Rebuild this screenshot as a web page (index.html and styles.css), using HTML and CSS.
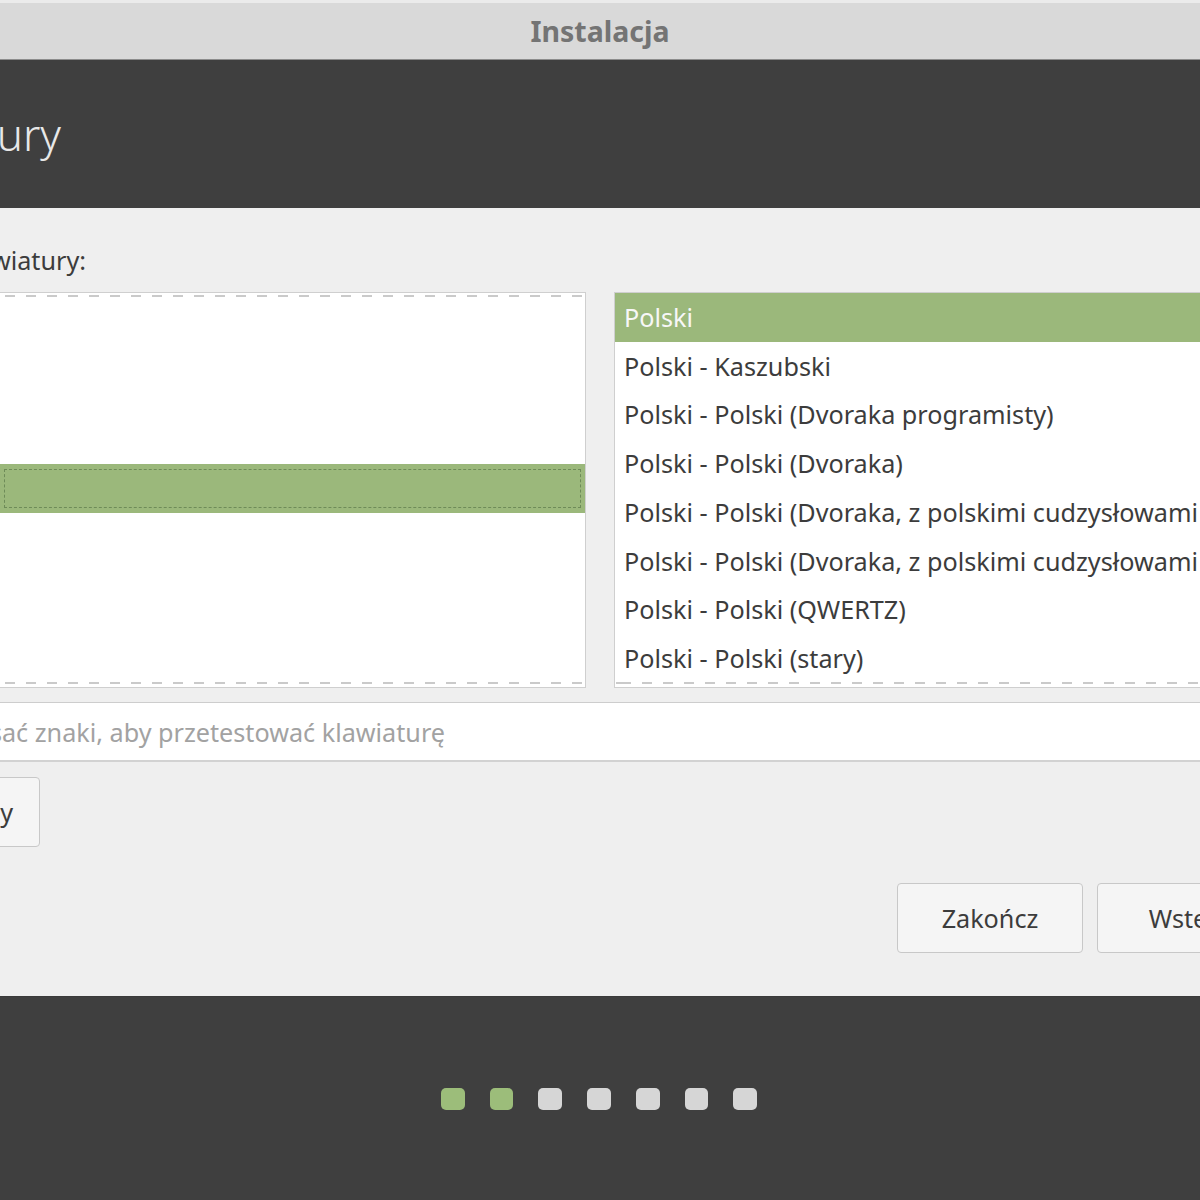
FILE: index.html
```html
<!DOCTYPE html>
<html lang="pl">
<head>
<meta charset="utf-8">
<title>Instalacja</title>
<link rel="stylesheet" href="styles.css">
</head>
<body>
<div class="window">
  <div class="titlebar"><span class="title">Instalacja</span></div>
  <div class="header">
    <div class="clip heading-clip"><span class="heading">Układ klawiatury</span></div>
  </div>
  <div class="content">
    <div class="clip label-clip"><span class="label">Wybierz układ klawiatury:</span></div>
    <div class="lists">
      <div class="list list-left">
        <div class="spacer"></div>
        <div class="row selected focused"><span>Polski</span></div>
      </div>
      <div class="list list-right">
        <div class="row selected"><span>Polski</span></div>
        <div class="row"><span>Polski - Kaszubski</span></div>
        <div class="row"><span>Polski - Polski (Dvoraka programisty)</span></div>
        <div class="row"><span>Polski - Polski (Dvoraka)</span></div>
        <div class="row"><span>Polski - Polski (Dvoraka, z polskimi cudzysłowami na klawiszu cudzysłowu)</span></div>
        <div class="row"><span>Polski - Polski (Dvoraka, z polskimi cudzysłowami na klawiszu 1)</span></div>
        <div class="row"><span>Polski - Polski (QWERTZ)</span></div>
        <div class="row"><span>Polski - Polski (stary)</span></div>
      </div>
    </div>
    <div class="test-field">
      <div class="clip placeholder-clip"><span class="placeholder">Tutaj można wpisać znaki, aby przetestować klawiaturę</span></div>
    </div>
    <div class="clip detect-clip"><div class="btn detect">Wykryj układ klawiatury</div></div>
    <div class="actions">
      <div class="btn action">Zakończ</div>
      <div class="btn action">Wstecz</div>
    </div>
  </div>
  <div class="footer">
    <div class="dots">
      <span class="dot done"></span>
      <span class="dot done"></span>
      <span class="dot"></span>
      <span class="dot"></span>
      <span class="dot"></span>
      <span class="dot"></span>
      <span class="dot"></span>
    </div>
  </div>
</div>
</body>
</html>
```

FILE: styles.css
```css
* { box-sizing: border-box; }
html, body {
  margin: 0;
  padding: 0;
  width: 1200px;
  height: 1200px;
  overflow: hidden;
  background: #3f3f3f;
  font-family: "Noto Sans", "Open Sans", sans-serif;
}
.window {
  width: 1200px;
  height: 1200px;
  display: flex;
  flex-direction: column;
  overflow: hidden;
}
.clip {
  display: flex;
  justify-content: flex-end;
  white-space: nowrap;
}
.clip > * { flex: none; }

/* title bar */
.titlebar {
  height: 60px;
  flex: none;
  background: #d9d9d9;
  border-top: 3px solid #ebebeb;
  border-bottom: 1px solid #8c8c8c;
  display: flex;
  align-items: center;
  justify-content: center;
}
.title {
  font-weight: 700;
  font-size: 28.5px;
  color: #747474;
  margin-top: 0;
}

/* dark header */
.header {
  height: 148px;
  flex: none;
  background: #3f3f3f;
  padding-top: 44px;
}
.heading-clip { width: 61px; }
.heading {
  font-size: 44px;
  font-weight: 300;
  color: #e8e8e8;
  line-height: 60px;
}

/* content */
.content {
  height: 788px;
  flex: none;
  background: #efefef;
  padding-top: 29px;
}
.label-clip {
  width: 86px;
  height: 46px;
  margin-bottom: 9px;
  align-items: center;
}
.label {
  font-size: 25.2px;
  color: #3c3c3c;
}

.lists {
  display: flex;
  gap: 28px;
  height: 396px;
}
.list {
  position: relative;
  background: #ffffff;
  border: 1px solid #cfcfcf;
  height: 396px;
  overflow: hidden;
  flex: none;
}
.list-left {
  width: 588px;
  margin-left: -2px;
}
.list-right {
  width: 700px;
}
.list::after {
  content: "";
  position: absolute;
  left: 0;
  right: 0;
  bottom: 3px;
  height: 2px;
  background: repeating-linear-gradient(to right, #cacaca 0 10px, transparent 10px 21px);
  background-position: 6px 0;
}
.list-left::before {
  content: "";
  position: absolute;
  left: 0;
  right: 0;
  top: 2px;
  height: 2px;
  background: repeating-linear-gradient(to right, #cacaca 0 10px, transparent 10px 21px);
  background-position: 6px 0;
}
.spacer { height: 171px; }
.row {
  height: 48.75px;
  display: flex;
  align-items: center;
  padding-left: 9px;
  font-size: 25.2px;
  color: #3c3c3c;
  white-space: nowrap;
  position: relative;
}
.row span { margin-top: -1px; }
.row.selected {
  background: #9bb87b;
  color: #f7f7f7;
}
.list-left .row { height: 49px; }
.list-left .row span { visibility: hidden; }
.row.focused::after {
  content: "";
  position: absolute;
  left: 5px;
  right: 4px;
  top: 5px;
  bottom: 5px;
  border: 1px dashed #6e8b58;
}

.test-field {
  margin-top: 14px;
  margin-left: -2px;
  width: 1210px;
  height: 60px;
  background: #ffffff;
  border-top: 1px solid #cdcdcd;
  border-bottom: 2px solid #d2d2d2;
  display: flex;
  align-items: center;
}
.placeholder-clip { width: 447px; }
.placeholder {
  font-size: 25.2px;
  color: #a2a2a2;
  margin-top: 1px;
}

.detect-clip {
  width: 40px;
  margin-top: 15px;
}
.btn {
  height: 70px;
  display: flex;
  align-items: center;
  justify-content: center;
  background: #f5f5f5;
  border: 1px solid #c8c8c8;
  border-radius: 4px;
  font-size: 25.2px;
  color: #3c3c3c;
  white-space: nowrap;
}
.detect {
  padding: 0 26px;
}
.actions {
  display: flex;
  gap: 14px;
  padding-left: 897px;
  margin-top: 36px;
}
.action {
  width: 186px;
  flex: none;
}

/* footer */
.footer {
  flex: 1;
  background: #3f3f3f;
  border-top: 1px solid #3a3a3a;
  display: flex;
  justify-content: center;
  padding-top: 91px;
}
.dots {
  display: flex;
  gap: 25px;
  height: 22px;
  margin-left: -2px;
}
.dot {
  width: 23.7px;
  height: 22px;
  border-radius: 5px;
  background: #d6d6d6;
}
.dot.done { background: #9cbd7a; }
```
